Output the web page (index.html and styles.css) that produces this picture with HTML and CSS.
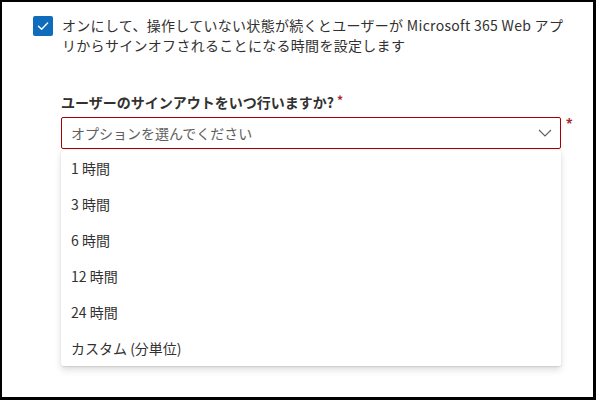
FILE: index.html
```html
<!DOCTYPE html>
<html lang="ja">
<head>
<meta charset="utf-8">
<link rel="stylesheet" href="styles.css">
</head>
<body>
<div class="frame">
  <div class="check-row">
    <span class="checkbox">
      <svg width="20" height="20" viewBox="0 0 20 20"><path d="M5.5 10.2 L8.6 13.2 L14.6 7" fill="none" stroke="#fff" stroke-width="1.4" stroke-linecap="round" stroke-linejoin="round"/></svg>
    </span>
    <p class="desc">オンにして、操作していない状態が続くとユーザーが Microsoft 365 Web アプ<br>リからサインオフされることになる時間を設定します</p>
  </div>
  <div class="field">
    <div class="label">ユーザーのサインアウトをいつ行いますか?<span class="req">*</span></div>
    <div class="select-row">
      <div class="select-wrap">
        <div class="select">
          <span class="placeholder">オプションを選んでください</span>
          <svg class="chev" width="14" height="8" viewBox="0 0 14 8"><path d="M1 1 L7 7 L13 1" fill="none" stroke="#605e5c" stroke-width="1.1"/></svg>
        </div>
        <ul class="menu">
          <li>1 時間</li>
          <li>3 時間</li>
          <li>6 時間</li>
          <li>12 時間</li>
          <li>24 時間</li>
          <li>カスタム (分単位)</li>
        </ul>
      </div>
      <span class="req side">*</span>
    </div>
  </div>
</div>
</body>
</html>
```
FILE: styles.css
```css
html, body {
  margin: 0;
  padding: 0;
  background: #000;
}
body {
  font-family: "Open Sans", "Noto Sans CJK JP", sans-serif;
  font-size: 14px;
  color: #323130;
}
.frame {
  margin: 2px 3px 3px 2px;
  height: 395px;
  background: #fff;
  box-sizing: border-box;
  padding: 13px 0 0 31px;
}
.check-row {
  display: flex;
  gap: 9px;
  align-items: flex-start;
}
.checkbox {
  flex: none;
  width: 20px;
  height: 20px;
  margin-top: 1px;
  border-radius: 2px;
  background: #0f6cbd;
  display: flex;
}
.desc {
  margin: 0;
  width: 520px;
  line-height: 20px;
  letter-spacing: 0.3px;
  font-family: "Noto Sans CJK JP", sans-serif;
}
.field {
  margin-top: 35px;
  padding-left: 28px;
}
.label {
  font-weight: 700;
  line-height: 20px;
  font-family: "Noto Sans CJK JP", sans-serif;
}
.req {
  color: #a4262c;
  font-weight: 700;
  font-size: 12px;
  margin-left: 3px;
  vertical-align: 3px;
}
.select-row {
  display: flex;
  align-items: flex-start;
  margin-top: 5px;
}
.select-wrap {
  position: relative;
  width: 500px;
}
.select {
  height: 32px;
  box-sizing: border-box;
  border: 1px solid #a80000;
  border-radius: 2px;
  display: flex;
  align-items: center;
  justify-content: space-between;
  padding: 0 8px 0 9px;
  font-family: "Noto Sans CJK JP", sans-serif;
}
.placeholder {
  color: #605e5c;
}
.side {
  margin-left: 5px;
  margin-top: -2px;
}
.menu {
  position: absolute;
  left: 0;
  top: 33px;
  width: 500px;
  margin: 0;
  padding: 0;
  list-style: none;
  background: #fff;
  box-shadow: 0 3.2px 7.2px rgba(0,0,0,0.13), 0 0.6px 1.8px rgba(0,0,0,0.11);
  border-radius: 2px;
  font-family: "Noto Sans CJK JP", sans-serif;
}
.menu li {
  height: 36px;
  line-height: 36px;
  padding-left: 10px;
}
```
